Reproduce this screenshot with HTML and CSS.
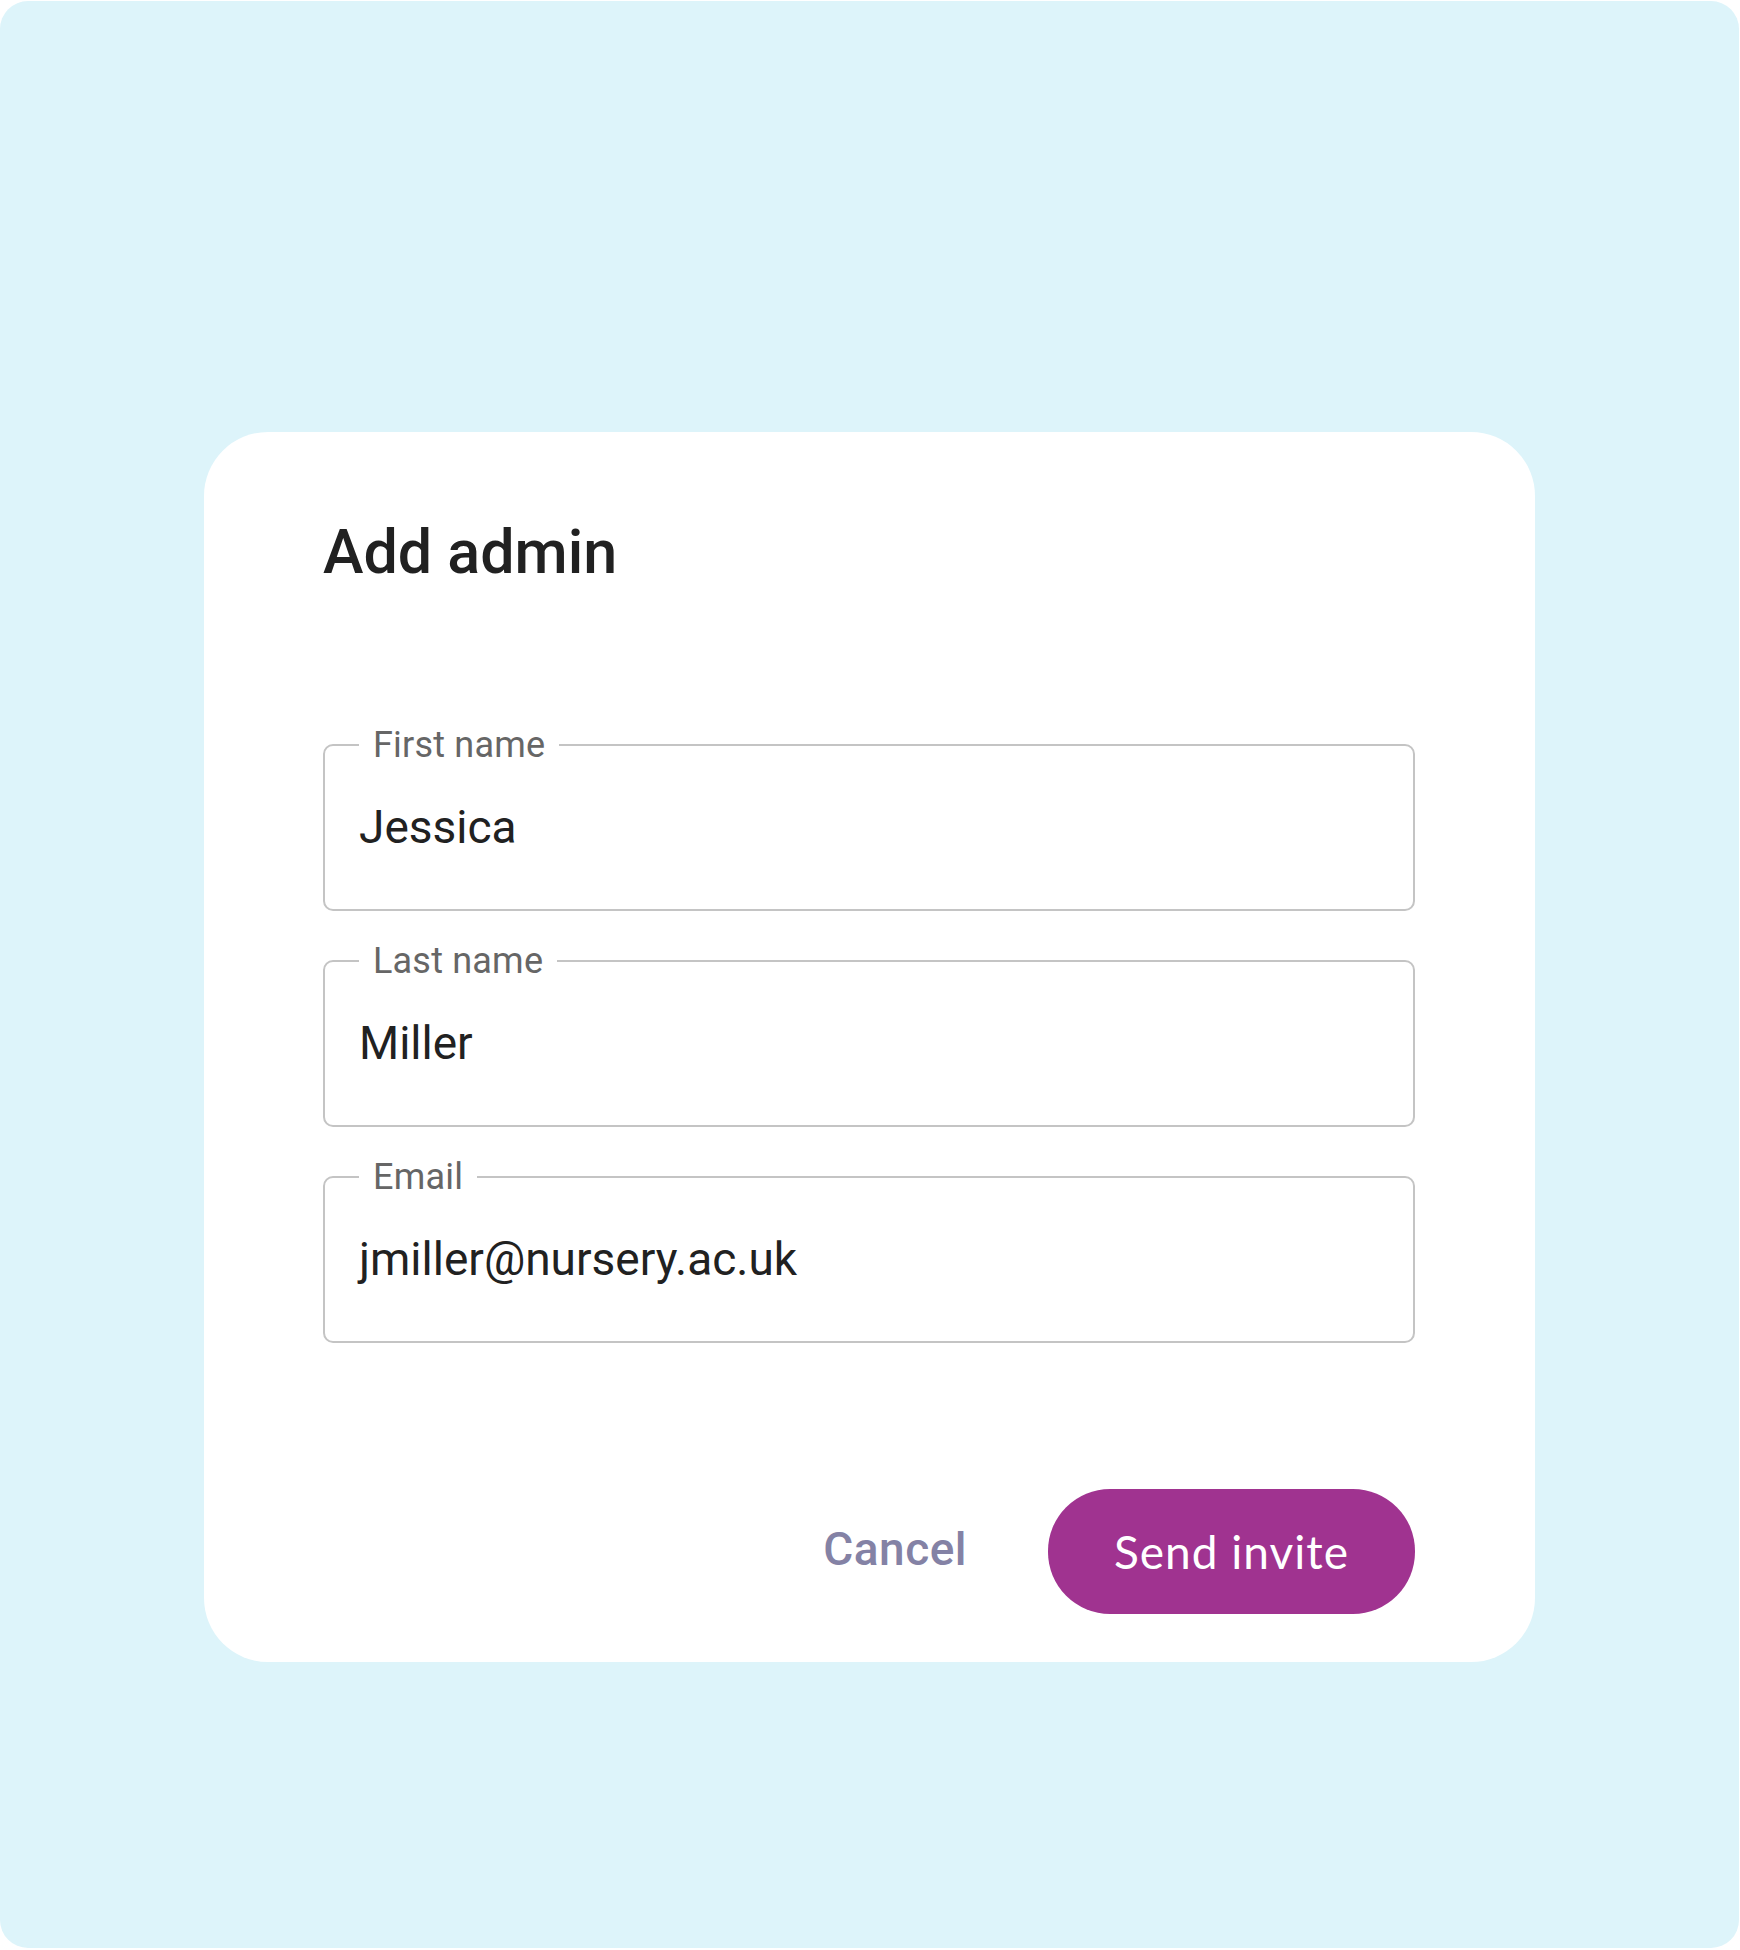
FILE: index.html
```html
<!DOCTYPE html>
<html lang="en">
<head>
    <meta charset="UTF-8">
    <meta name="viewport" content="width=device-width, initial-scale=1.0">
    <title>Add admin</title>
    <link rel="stylesheet" href="styles.css">
</head>
<body>
    <div class="backdrop">
        <div class="dialog">
            <h1 class="dialog-title">Add admin</h1>

            <form class="dialog-form">
                <fieldset class="field">
                    <legend class="field-label">First name</legend>
                    <div class="field-value">Jessica</div>
                </fieldset>

                <fieldset class="field">
                    <legend class="field-label">Last name</legend>
                    <div class="field-value">Miller</div>
                </fieldset>

                <fieldset class="field">
                    <legend class="field-label">Email</legend>
                    <div class="field-value">jmiller@nursery.ac.uk</div>
                </fieldset>
            </form>

            <div class="dialog-actions">
                <button type="button" class="btn-cancel">Cancel</button>
                <button type="button" class="btn-send">Send invite</button>
            </div>
        </div>
    </div>
</body>
</html>
```

FILE: styles.css
```css
* {
    margin: 0;
    padding: 0;
    box-sizing: border-box;
}

body {
    font-family: Roboto, 'Liberation Sans', sans-serif;
    background: #ffffff;
    width: 1740px;
    height: 1950px;
    overflow: hidden;
}

.backdrop {
    width: 1739px;
    height: 1947px;
    margin-top: 1px;
    background: #ddf4fa;
    border-radius: 28px;
    padding-top: 431px;
}

.dialog {
    width: 1331px;
    height: 1230px;
    margin-left: 204px;
    background: #ffffff;
    border-radius: 64px;
    padding: 84px 120px 48px 119px;
    display: flex;
    flex-direction: column;
}

.dialog-title {
    font-size: 61px;
    font-weight: 500;
    line-height: 1.2;
    color: #212121;
}

.dialog-form {
    margin-top: 138px;
    display: flex;
    flex-direction: column;
    gap: 32px;
}

.field {
    border: 2px solid #c4c4c4;
    border-radius: 10px;
    padding: 0 34px;
}

.field-label {
    font-size: 36px;
    line-height: 36px;
    color: #666666;
    padding: 0 14px;
    letter-spacing: 0.2px;
}

.field-value {
    font-size: 46px;
    line-height: 54px;
    color: #212121;
    padding: 37px 0 55px;
}

.dialog-actions {
    margin-top: auto;
    display: flex;
    justify-content: flex-end;
    align-items: center;
    gap: 57px;
}

.btn-cancel {
    font-family: Roboto, 'Liberation Sans', sans-serif;
    font-size: 46px;
    font-weight: 500;
    letter-spacing: 0.5px;
    color: #8482a5;
    background: none;
    border: none;
    height: 124px;
    padding: 0 24px 5px;
    cursor: pointer;
}

.btn-send {
    font-family: Lato, 'Liberation Sans', sans-serif;
    font-size: 46px;
    letter-spacing: 1px;
    color: #ffffff;
    background: #a03390;
    border: none;
    border-radius: 62px;
    height: 125px;
    padding: 0 66px;
    cursor: pointer;
}
```
